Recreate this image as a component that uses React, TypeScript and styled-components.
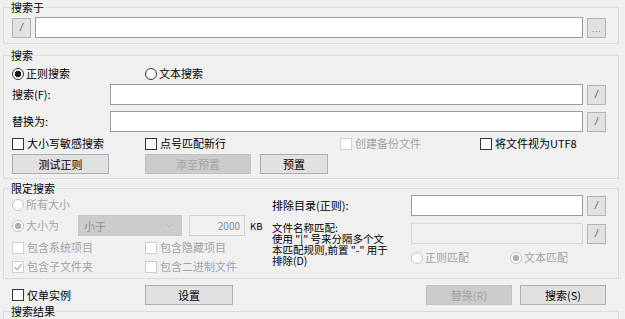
import React from "react";
import styled, { createGlobalStyle } from "styled-components";
import { ChevronDown } from "lucide-react";

const GlobalStyle = createGlobalStyle`
  html, body {
    margin: 0;
    padding: 0;
    background: #f0f0f0;
    overflow: hidden;
  }
  body {
    font-family: "Noto Sans CJK SC", "Noto Sans", sans-serif;
    font-size: 11px;
    color: #000;
  }
`;

const Page = styled.div`
  width: 625px;
  height: 319px;
  overflow: hidden;
  box-sizing: border-box;
  padding: 1px 6px 0 3px;
`;

const Group = styled.fieldset<{ $mt?: number; $pt?: number; $pb?: number; $h?: number }>`
  margin: ${(p) => p.$mt ?? 0}px 0 0 0;
  padding: ${(p) => p.$pt ?? 0}px 12px ${(p) => p.$pb ?? 0}px 8px;
  border: 1px solid #dcdcdc;
  min-width: 0;
  box-sizing: border-box;
  ${(p) => (p.$h ? `height: ${p.$h}px;` : "")}
`;

const Legend = styled.legend`
  padding: 0 1px;
  margin-left: -2px;
  font-size: 11px;
  line-height: 13px;
`;

const Row = styled.div<{ $mt?: number; $h?: number }>`
  display: flex;
  align-items: center;
  height: ${(p) => p.$h ?? 21}px;
  margin-top: ${(p) => p.$mt ?? 0}px;
`;

const Label = styled.span<{ $w: number }>`
  width: ${(p) => p.$w}px;
  flex: none;
  line-height: 13px;
  white-space: nowrap;
`;

const TextBox = styled.input<{ $disabled?: boolean }>`
  flex: 1;
  min-width: 0;
  height: 21px;
  margin: 0;
  padding: 0 3px;
  box-sizing: border-box;
  border: 1px solid ${(p) => (p.$disabled ? "#d6d6d6" : "#9c9c9c")};
  background: ${(p) => (p.$disabled ? "#f0f0f0" : "#fff")};
  outline: none;
`;

const SmallButton = styled.button<{ $first?: boolean }>`
  width: 19px;
  height: 20px;
  margin: ${(p) => (p.$first ? "0 4px 0 0" : "0 0 0 4px")};
  padding: 0;
  flex: none;
  box-sizing: border-box;
  border: 1px solid #b4b4b4;
  background: #e1e1e1;
  color: #555;
  font-family: "Liberation Sans", sans-serif;
  font-size: 10px;
  font-style: italic;
  line-height: 18px;
`;

const Dots = styled(SmallButton)`
  font-style: normal;
  color: #7a7a7a;
  font-size: 9px;
  letter-spacing: 0.5px;
  line-height: 20px;
`;

const Btn = styled.button<{ $w: number; $disabled?: boolean; $ml?: number }>`
  width: ${(p) => p.$w}px;
  height: 20px;
  margin: 0 0 0 ${(p) => p.$ml ?? 0}px;
  padding: 0;
  flex: none;
  box-sizing: border-box;
  border: 1px solid ${(p) => (p.$disabled ? "#c2c2c2" : "#adadad")};
  background: ${(p) => (p.$disabled ? "#cccccc" : "#e1e1e1")};
  color: ${(p) => (p.$disabled ? "#a3a3a3" : "#000")};
  font-family: "Noto Sans CJK SC", "Noto Sans", sans-serif;
  font-size: 11px;
  line-height: 18px;
`;

const Choice = styled.label<{ $w?: number; $disabled?: boolean }>`
  display: inline-flex;
  align-items: center;
  gap: 2px;
  flex: none;
  width: ${(p) => (p.$w ? `${p.$w}px` : "auto")};
  color: ${(p) => (p.$disabled ? "#a4a4a4" : "#000")};
  line-height: 13px;
  white-space: nowrap;
`;

const RadioMark = styled.span<{ $checked?: boolean; $disabled?: boolean }>`
  width: 12px;
  height: 12px;
  flex: none;
  box-sizing: border-box;
  border-radius: 50%;
  border: 1px solid ${(p) => (p.$disabled ? "#c4c4c4" : "#333")};
  background: ${(p) =>
    p.$checked
      ? `radial-gradient(circle, ${p.$disabled ? "#b0b0b0" : "#1a1a1a"} 0 3px, #fff 3.6px)`
      : "#fff"};
`;

const BoxMark = styled.span<{ $disabled?: boolean }>`
  width: 12px;
  height: 12px;
  flex: none;
  margin-right: 1px;
  box-sizing: border-box;
  border: 1px solid ${(p) => (p.$disabled ? "#cfcfcf" : "#333")};
  background: #fff;
  display: flex;
  align-items: center;
  justify-content: center;
`;

const Radio: React.FC<{ w?: number; checked?: boolean; disabled?: boolean; children: React.ReactNode }> = ({
  w,
  checked,
  disabled,
  children,
}) => (
  <Choice $w={w} $disabled={disabled}>
    <RadioMark $checked={checked} $disabled={disabled} />
    {children}
  </Choice>
);

const Check: React.FC<{ w?: number; checked?: boolean; disabled?: boolean; children: React.ReactNode }> = ({
  w,
  checked,
  disabled,
  children,
}) => (
  <Choice $w={w} $disabled={disabled}>
    <BoxMark $disabled={disabled}>
      {checked && (
        <svg width="10" height="10" viewBox="0 0 10 10">
          <path d="M1.5 5.2 L4 7.6 L8.6 2.4" fill="none" stroke={disabled ? "#a8a8a8" : "#222"} strokeWidth="1.1" />
        </svg>
      )}
    </BoxMark>
    {children}
  </Choice>
);

const LimitBody = styled.div`
  display: flex;
`;

const LeftCol = styled.div`
  width: 260px;
  flex: none;
`;

const RightCol = styled.div`
  flex: 1;
  min-width: 0;
`;

const Select = styled.div`
  width: 104px;
  height: 21px;
  flex: none;
  box-sizing: border-box;
  border: 1px solid #c8c8c8;
  background: #cccccc;
  color: #8c8c8c;
  display: flex;
  align-items: center;
  justify-content: space-between;
  padding: 0 6px 0 5px;
  font-size: 11px;
`;

const NumberBox = styled.div`
  width: 56px;
  height: 21px;
  flex: none;
  margin-left: 7px;
  box-sizing: border-box;
  border: 1px solid #d2d2d2;
  background: #f0f0f0;
  color: #8c8c8c;
  text-align: right;
  padding-right: 4px;
  line-height: 19px;
  font-size: 10px;
`;

const Unit = styled.span`
  margin-left: 5px;
  font-size: 9.5px;
`;

const NameMatch = styled.div`
  display: flex;
  margin-top: 7px;
`;

const Note = styled.div`
  width: 139px;
  flex: none;
  margin-top: -1px;
  font-size: 10.5px;
  line-height: 11px;
  white-space: nowrap;
`;

const NameInputs = styled.div`
  flex: 1;
  min-width: 0;
`;

const BottomBar = styled.div`
  display: flex;
  align-items: center;
  height: 20px;
  margin-top: 6px;
  padding: 0 13px 0 9px;
`;

const Spacer = styled.div`
  flex: 1;
`;

export default function App() {
  return (
    <Page>
      <GlobalStyle />
      <Group $pt={3} $pb={5}>
        <Legend>搜索于</Legend>
        <Row>
          <SmallButton $first>/</SmallButton>
          <TextBox readOnly />
          <Dots>...</Dots>
        </Row>
      </Group>

      <Group $mt={5} $pt={5} $pb={4}>
        <Legend>搜索</Legend>
        <Row $h={13}>
          <Radio w={133} checked>
            正则搜索
          </Radio>
          <Radio>文本搜索</Radio>
        </Row>
        <Row $mt={4}>
          <Label $w={98}>搜索(F):</Label>
          <TextBox readOnly />
          <SmallButton>/</SmallButton>
        </Row>
        <Row $mt={6}>
          <Label $w={98}>替换为:</Label>
          <TextBox readOnly />
          <SmallButton>/</SmallButton>
        </Row>
        <Row $mt={5} $h={13}>
          <Check w={133}>大小写敏感搜索</Check>
          <Check w={195}>点号匹配新行</Check>
          <Check w={140} disabled>
            创建备份文件
          </Check>
          <Check>将文件视为UTF8</Check>
        </Row>
        <Row $mt={4} $h={20}>
          <Btn $w={97}>测试正则</Btn>
          <Btn $w={106} $ml={36} $disabled>
            添至预置
          </Btn>
          <Btn $w={68} $ml={9}>
            预置
          </Btn>
        </Row>
      </Group>

      <Group $mt={3} $pt={0} $pb={5}>
        <Legend>限定搜索</Legend>
        <LimitBody>
          <LeftCol>
            <Row $mt={3} $h={13}>
              <Radio disabled>所有大小</Radio>
            </Row>
            <Row $mt={4}>
              <Radio w={66} checked disabled>
                大小为
              </Radio>
              <Select>
                小于
                <ChevronDown size={11} color="#a5a5a5" strokeWidth={1.2} />
              </Select>
              <NumberBox>2000</NumberBox>
              <Unit>KB</Unit>
            </Row>
            <Row $mt={5} $h={13}>
              <Check w={133} disabled>
                包含系统项目
              </Check>
              <Check disabled>包含隐藏项目</Check>
            </Row>
            <Row $mt={6} $h={13}>
              <Check w={133} checked disabled>
                包含子文件夹
              </Check>
              <Check disabled>包含二进制文件</Check>
            </Row>
          </LeftCol>
          <RightCol>
            <Row>
              <Label $w={139}>排除目录(正则):</Label>
              <TextBox readOnly />
              <SmallButton>/</SmallButton>
            </Row>
            <NameMatch>
              <Note>
                文件名称匹配:
                <br />
                使用 "|" 号来分隔多个文
                <br />
                本匹配规则,前置 "-" 用于
                <br />
                排除(D)
              </Note>
              <NameInputs>
                <Row>
                  <TextBox readOnly $disabled />
                  <SmallButton>/</SmallButton>
                </Row>
                <Row $mt={7} $h={13}>
                  <Radio w={99} disabled>
                    正则匹配
                  </Radio>
                  <Radio checked disabled>
                    文本匹配
                  </Radio>
                </Row>
              </NameInputs>
            </NameMatch>
          </RightCol>
        </LimitBody>
      </Group>

      <BottomBar>
        <Check w={133}>仅单实例</Check>
        <Btn $w={88}>设置</Btn>
        <Spacer />
        <Btn $w={86} $disabled>
          替换(R)
        </Btn>
        <Btn $w={86} $ml={8}>
          搜索(S)
        </Btn>
      </BottomBar>

      <Group $h={40}>
        <Legend>搜索结果</Legend>
      </Group>
    </Page>
  );
}
